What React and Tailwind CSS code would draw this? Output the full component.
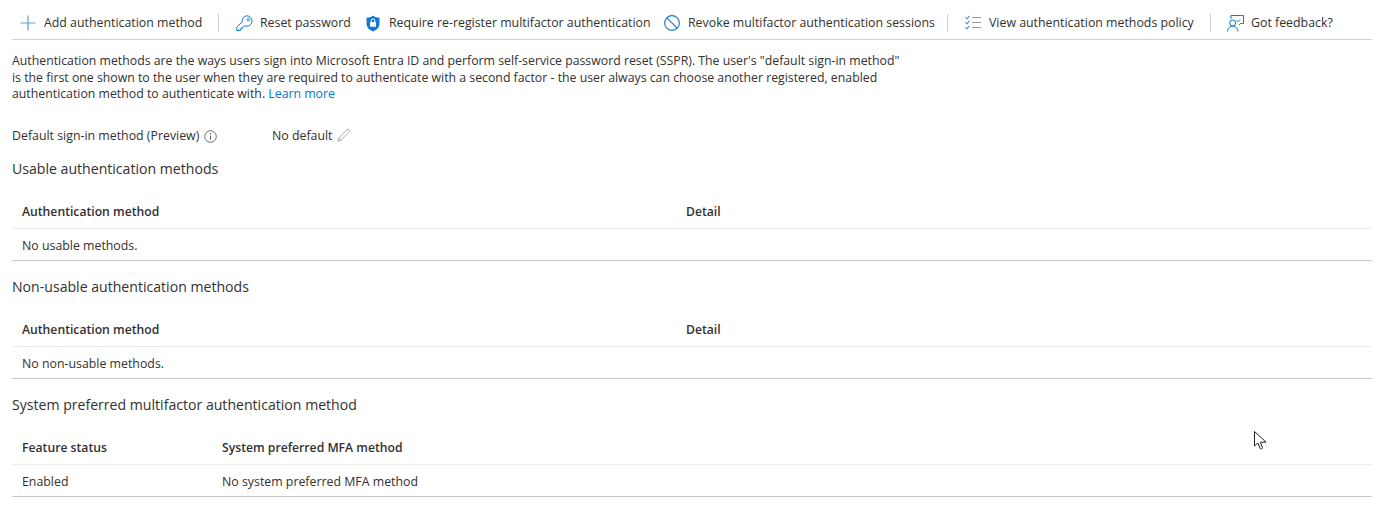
import React from "react";

const PlusIcon = () => (
  <svg width="16" height="16" viewBox="0 0 16 16" className="shrink-0">
    <path d="M8 0.5v15M0.5 8h15" stroke="#5ea0d8" strokeWidth="1.2" fill="none" />
  </svg>
);

const KeyIcon = () => (
  <svg width="17" height="17" viewBox="0 0 17 17" fill="none" className="shrink-0">
    <path
      d="M10.8 0.8a5.2 5.2 0 0 1 0 10.4c-.7 0-1.3-.1-1.9-.4L7.6 12.1H6v1.7H4.300v1.700H0.700v-3.100l5.500-5.500a5.200 5.200 0 0 1 4.600-6.100Z"
      stroke="#0f78d4"
      strokeWidth="1"
      strokeLinejoin="round"
    />
    <circle cx="12.300" cy="4.700" r="1.100" stroke="#0f78d4" strokeWidth="1" />
  </svg>
);

const ShieldIcon = () => (
  <svg width="14" height="17" viewBox="0 0 14 17" className="shrink-0">
    <path d="M7 .5c1.500 1.400 3.600 2.200 6.500 2.300v5.700c0 3.600-2.500 6.300-6.500 8C3 14.800.500 12.100.500 8.500V2.800C3.400 2.700 5.500 1.900 7 .5Z" fill="#0f78d4" />
    <rect x="4" y="7" width="6" height="4.800" rx=".6" fill="#fff" />
    <path d="M5.200 7V5.700a1.800 1.800 0 0 1 3.600 0V7" stroke="#fff" strokeWidth="1" fill="none" />
  </svg>
);

const BanIcon = () => (
  <svg width="16" height="16" viewBox="0 0 16 16" fill="none" className="shrink-0">
    <circle cx="8" cy="8" r="7.400" stroke="#0f78d4" strokeWidth="1.100" />
    <path d="M2.800 2.800l10.400 10.400" stroke="#0f78d4" strokeWidth="1.100" />
  </svg>
);

const ChecklistIcon = () => (
  <svg width="16" height="16" viewBox="0 0 16 16" fill="none" className="shrink-0">
    <path d="M.5 2.300l1.500 1.500L4.500.8M.5 7.300l1.500 1.500 2.500-3M.5 12.300l1.500 1.500 2.500-3" stroke="#3f8fd6" strokeWidth="1.100" />
    <path d="M7 2.500h9M7 7.500h9M7 12.500h9" stroke="#9a9a9a" strokeWidth="1.100" />
  </svg>
);

const FeedbackIcon = () => (
  <svg width="17" height="17" viewBox="0 0 17 17" fill="none" className="shrink-0">
    <path d="M4 4V.5h12.500v8h-3l-1.500 1.500" stroke="#0f78d4" strokeWidth="1" />
    <path d="M9.500 5.500l1.300 1.300 2.200-2.300" stroke="#0f78d4" strokeWidth="1" />
    <circle cx="5.700" cy="8" r="3" stroke="#0f78d4" strokeWidth="1" />
    <path d="M.5 16.500c0-3 2.200-5.400 5.200-5.400s5.200 2.400 5.200 5.400" stroke="#0f78d4" strokeWidth="1" />
  </svg>
);

const InfoIcon = () => (
  <svg width="13" height="13" viewBox="0 0 13 13" fill="none" className="shrink-0">
    <circle cx="6.500" cy="6.500" r="5.800" stroke="#605e5c" strokeWidth=".9" />
    <path d="M6.500 5.600v4" stroke="#605e5c" strokeWidth="1" />
    <circle cx="6.500" cy="3.800" r=".7" fill="#605e5c" />
  </svg>
);

const PencilIcon = () => (
  <svg width="13" height="13" viewBox="0 0 13 13" fill="none" className="shrink-0 mb-[3px]">
    <path d="M.7 12.300l.9-3.300L9.800.9a1.400 1.400 0 0 1 2.300 2.300L3.900 11.400l-3.200.9ZM1.600 9l2.300 2.400" stroke="#a6a6a6" strokeWidth=".9" />
  </svg>
);

const ToolbarItem = ({ icon, label, labelWidth }) => (
  <div className="flex items-center gap-2 px-2 h-[32px] shrink-0">
    <span className="w-4 flex items-center justify-center">{icon}</span>
    <span className={`${labelWidth} whitespace-nowrap`}>{label}</span>
  </div>
);

const Separator = ({ margin = "mx-2" }) => <div className={`w-px h-[18px] bg-[#d2d0ce] ${margin} shrink-0`} />;

const DataTable = ({ firstCol, head1, head2, cell1, cell2 }) => (
  <div className="border-b border-[#c8c6c4]">
    <div className="flex items-center h-[34px] pt-[2px] border-b border-[#edebe9] font-semibold text-[12.2px]">
      <div className={`${firstCol} px-2.5`}>{head1}</div>
      <div className="px-2.5">{head2}</div>
    </div>
    <div className="flex items-center h-[31px] pt-[4px]">
      <div className={`${firstCol} px-2.5`}>{cell1}</div>
      {cell2 && <div className="px-2.5">{cell2}</div>}
    </div>
  </div>
);

const Section = ({ title, ...table }) => (
  <section>
    <h2 className="text-[14.1px] leading-5 h-[20px] mb-[16px]">{title}</h2>
    <DataTable {...table} />
  </section>
);

export default function App() {
  return (
    <div className="relative bg-white text-[#323130] text-[12.35px] pl-3 pr-[5px] pt-[7px] h-[517px] overflow-hidden font-['Open_Sans','Noto_Sans',sans-serif]">
      {/* Toolbar */}
      <div className="flex items-center h-[33px] border-b border-[#d2d0ce]">
        <ToolbarItem icon={<PlusIcon />} label="Add authentication method" labelWidth="w-[158px]" />
        <Separator margin="ml-2 mr-[9px]" />
        <ToolbarItem icon={<KeyIcon />} label="Reset password" labelWidth="w-[89px]" />
        <ToolbarItem icon={<ShieldIcon />} label="Require re-register multifactor authentication" labelWidth="w-[259px]" />
        <ToolbarItem icon={<BanIcon />} label="Revoke multifactor authentication sessions" labelWidth="w-[243px]" />
        <Separator margin="ml-2 mr-[9px]" />
        <ToolbarItem icon={<ChecklistIcon />} label="View authentication methods policy" labelWidth="w-[205px]" />
        <Separator />
        <ToolbarItem icon={<FeedbackIcon />} label="Got feedback?" labelWidth="w-[82px]" />
      </div>

      {/* Intro */}
      <div className="mt-[13px] text-[12.3px] leading-[16.5px] whitespace-nowrap">
        <p>Authentication methods are the ways users sign into Microsoft Entra ID and perform self-service password reset (SSPR). The user's "default sign-in method"</p>
        <p>is the first one shown to the user when they are required to authenticate with a second factor - the user always can choose another registered, enabled</p>
        <p>
          authentication method to authenticate with. <span className="text-[#0078d4]">Learn more</span>
        </p>
      </div>

      <div className="flex items-center h-[18px] mt-[25px]">
        <div className="flex items-center gap-[5px] w-[260px]">
          <span>Default sign-in method (Preview)</span>
          <InfoIcon />
        </div>
        <div className="flex items-center gap-1">
          <span>No default</span>
          <PencilIcon />
        </div>
      </div>

      <div className="flex flex-col gap-[16px] mt-[13px]">
        <Section title="Usable authentication methods" firstCol="w-[664px]" head1="Authentication method" head2="Detail" cell1="No usable methods." />
        <Section title="Non-usable authentication methods" firstCol="w-[664px]" head1="Authentication method" head2="Detail" cell1="No non-usable methods." />
        <Section title="System preferred multifactor authentication method" firstCol="w-[200px]" head1="Feature status" head2="System preferred MFA method" cell1="Enabled" cell2="No system preferred MFA method" />
      </div>

      {/* Mouse pointer captured in the screenshot */}
      <svg width="14" height="20" viewBox="0 0 14 20" className="absolute left-[1254px] top-[431px]">
        <path d="M.5.5v14.500l3.400-3 2.300 5.600c.3.700 2.500 0 2.300-.9L6.400 11.300l5.600-.2L.5.500Z" fill="#fff" stroke="#1f1f1f" strokeWidth="1" strokeLinejoin="round" />
      </svg>
    </div>
  );
}
